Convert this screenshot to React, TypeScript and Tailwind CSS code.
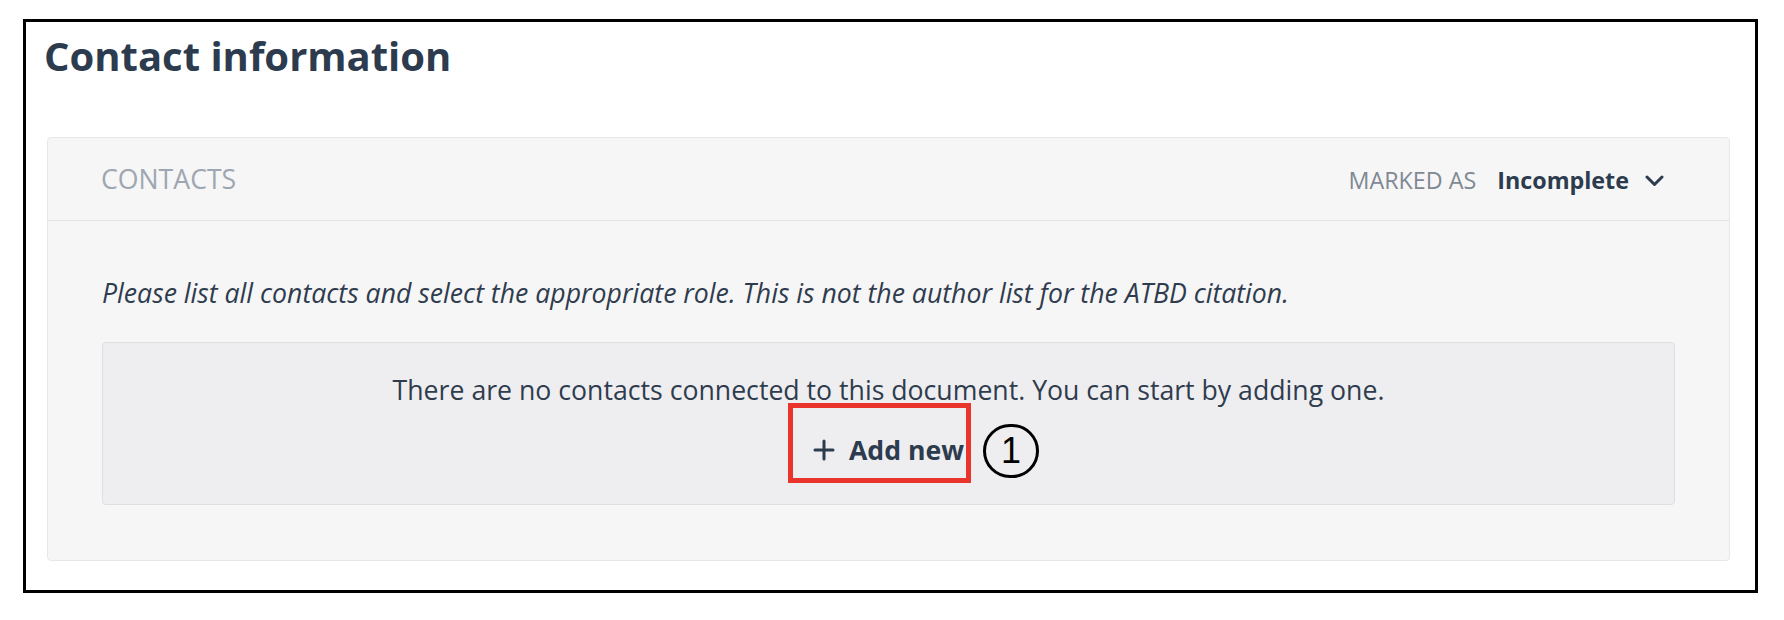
import React from "react";

export default function App() {
  const font = { fontFamily: '"Open Sans", "Noto Sans", sans-serif' };
  return (
    <div className="w-[1784px] h-[620px] bg-white" style={font}>
      <div className="ml-[23px] mt-[19px] w-[1735px] h-[574px] border-[3px] border-black bg-white pl-[21px] pr-[25px] pt-[10px]">
        <h1 className="text-[40px] leading-[48px] font-bold text-[#2d3b4e] ml-[-3px]">
          Contact information
        </h1>
        <div className="mt-[57px] rounded-[4px] border border-[#e6e7ea] bg-[#f6f6f7]">
          <div className="flex h-[83px] items-center justify-between border-b border-[#e4e5e8] pl-[53px] pr-[65px]">
            <span className="text-[26.67px] leading-[36px] text-[#9ea7b1]">CONTACTS</span>
            <div className="flex items-center">
              <span className="text-[23.3px] leading-[30px] text-[#7f8893] mt-[2px]">MARKED AS</span>
              <span className="ml-[21px] text-[23.3px] leading-[30px] font-bold text-[#2d3b4e] mt-[1px]">Incomplete</span>
              <svg className="ml-[16px] mt-[3px]" width="19" height="12" viewBox="0 0 19 12" fill="none">
                <path d="M2 2 L9.5 9.5 L17 2" stroke="#2d3b4e" strokeWidth="3" strokeLinecap="round" strokeLinejoin="round" />
              </svg>
            </div>
          </div>
          <div className="px-[54px] pt-[54px] pb-[55px]">
            <p className="text-[26.67px] leading-[36px] italic text-[#2f3c4e]">
              Please list all contacts and select the appropriate role. This is not the author list for the ATBD citation.
            </p>
            <div className="mt-[31px] h-[163px] rounded-[4px] border border-[#dedfe3] bg-[#eeeef0] flex flex-col items-center pt-[29px]">
              <p className="text-[26.67px] leading-[36px] text-[#2f3c4e]">
                There are no contacts connected to this document. You can start by adding one.
              </p>
              <div className="relative mt-[24px] flex items-center">
                <svg width="22" height="22" viewBox="0 0 22 22" fill="none" className="mr-[14px]">
                  <path d="M11 2 V20 M2 11 H20" stroke="#2d3b4e" strokeWidth="3" strokeLinecap="round" />
                </svg>
                <span className="text-[26.67px] leading-[36px] font-bold text-[#2d3b4e]">Add new</span>
                <div className="absolute left-[-25px] top-[-29px] w-[183px] h-[80px] border-[5px] border-[#e8342a]" />
                <div className="absolute left-[170px] top-[-8px] w-[56px] h-[54px] rounded-full border-[3px] border-black flex items-center justify-center">
                  <span className="text-[36px] leading-none text-black" style={{ fontFamily: '"Liberation Sans", Arial, sans-serif' }}>1</span>
                </div>
              </div>
            </div>
          </div>
        </div>
      </div>
    </div>
  );
}
